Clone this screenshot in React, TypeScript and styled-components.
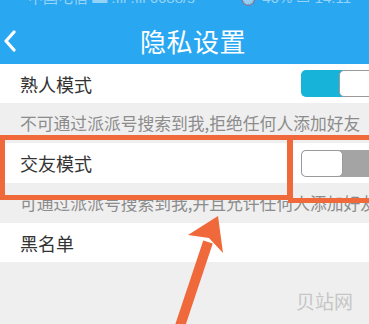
import React from "react"
import styled, { createGlobalStyle } from "styled-components"

const GlobalStyle = createGlobalStyle`
  html, body {
    margin: 0;
    padding: 0;
    background: #efefef;
  }
  body {
    font-family: "Noto Sans CJK SC", "Noto Sans", sans-serif;
  }
`

const Page = styled.div`
  position: relative;
  width: 369px;
  height: 324px;
  overflow: hidden;
  background: #efefef;
  display: flex;
  flex-direction: column;
`

const Header = styled.div`
  background: #29a7f1;
  display: flex;
  flex-direction: column;
`

const StatusBar = styled.div`
  height: 18px;
  overflow: hidden;
  display: flex;
  justify-content: space-between;
  align-items: flex-end;
  padding: 0 18px 0 28px;
  color: rgba(255, 255, 255, 0.5);
  font-family: "Liberation Sans", "Noto Sans CJK SC", sans-serif;
  font-size: 15px;
  line-height: 15px;
`

const StatusText = styled.span`
  margin-bottom: 13px;
  white-space: nowrap;
`

const NavBar = styled.div`
  height: 46px;
  display: flex;
  align-items: center;
`

const BackButton = styled.div`
  width: 28px;
  height: 46px;
  display: flex;
  align-items: center;
  padding-left: 3px;
`

const Title = styled.div`
  flex: 1;
  text-align: center;
  color: #fff;
  font-size: 26px;
  letter-spacing: 0.5px;
  margin-right: 14px;
  margin-top: -1px;
`

const Row = styled.div<{ $h?: number }>`
  height: ${(p) => p.$h ?? 39}px;
  background: #fff;
  display: flex;
  align-items: center;
  padding-left: 20px;
  color: #333;
  font-size: 18px;
`

const Label = styled.span`
  flex: 1;
`

const Note = styled.div`
  height: 40px;
  display: flex;
  align-items: center;
  padding-left: 20px;
  color: #8c8c8c;
  font-size: 16.8px;
  white-space: nowrap;
`

const Toggle = styled.div<{ $on: boolean }>`
  width: 80px;
  height: 27px;
  margin-right: -12px;
  border-radius: 5px;
  display: flex;
  flex-direction: ${(p) => (p.$on ? "row" : "row-reverse")};
  background: ${(p) => (p.$on ? "#17b3d8" : "#a4a4a4")};
  overflow: hidden;
`

const ToggleFill = styled.div`
  width: 38px;
`

const Knob = styled.div`
  flex: 1;
  background: #fff;
  border: 1px solid #9a9a9a;
  border-radius: 5px;
`

const Watermark = styled.div`
  position: absolute;
  left: 296px;
  top: 287px;
  color: #c6c6c6;
  font-size: 19px;
`

const Annotation = styled.svg`
  position: absolute;
  left: 0;
  top: 0;
  pointer-events: none;
`

export default function App() {
  return (
    <>
      <GlobalStyle />
      <Page>
        <Header>
          <StatusBar>
            <StatusText>中国电信 ▬ .ıll .ıll 6688/s</StatusText>
            <StatusText>⏰ 46% ▭ 14:11</StatusText>
          </StatusBar>
          <NavBar>
            <BackButton>
              <svg width="14" height="22" viewBox="0 0 14 22">
                <path
                  d="M11 2 L3 11 L11 20"
                  fill="none"
                  stroke="#fff"
                  strokeWidth="3.2"
                  strokeLinecap="round"
                  strokeLinejoin="round"
                />
              </svg>
            </BackButton>
            <Title>隐私设置</Title>
          </NavBar>
        </Header>

        <Row>
          <Label>熟人模式</Label>
          <Toggle $on>
            <ToggleFill />
            <Knob />
          </Toggle>
        </Row>
        <Note>不可通过派派号搜索到我,拒绝任何人添加好友</Note>

        <Row $h={40}>
          <Label>交友模式</Label>
          <Toggle $on={false}>
            <ToggleFill />
            <Knob />
          </Toggle>
        </Row>
        <Note>可通过派派号搜索到我,并且允许任何人添加好友</Note>

        <Row>
          <Label>黑名单</Label>
        </Row>

        <Watermark>贝站网</Watermark>

        <Annotation width="369" height="324" viewBox="0 0 369 324">
          <rect x="2.5" y="137.5" width="287" height="60" fill="none" stroke="#f0693a" strokeWidth="5" />
          <rect x="290.5" y="137.5" width="85" height="63" fill="none" stroke="#f0693a" strokeWidth="5" />
          <line x1="178" y1="332" x2="208" y2="242" stroke="#f0693a" strokeWidth="10" />
          <polygon points="218,216 188,235 209,238 223,253" fill="#f0693a" />
        </Annotation>
      </Page>
    </>
  )
}
